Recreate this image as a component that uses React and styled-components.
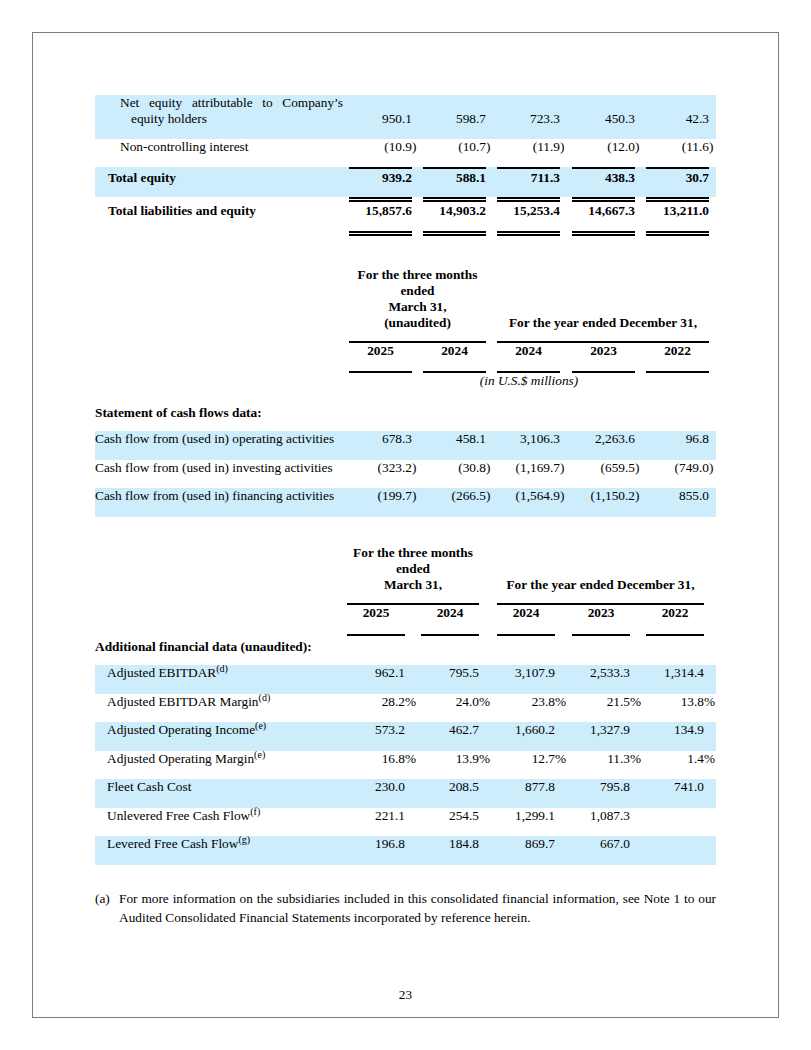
import styled, { createGlobalStyle, css } from "styled-components";

const BLUE = "#cdedfc";
// label column + five value columns + right padding
const WIDE = "1fr 69px 74px 74px 75px 74px 7px";
const NARROW = "1fr 74px 74px 76px 75px 74px 12px";

const GlobalStyle = createGlobalStyle`
  html, body {
    margin: 0;
    padding: 0;
    background: #fff;
  }
  body {
    font-family: "Liberation Serif", "Times New Roman", serif;
    color: #000;
  }
`;

const Page = styled.div`
  width: 811px;
  height: 1050px;
  padding: 32px;
  box-sizing: border-box;
`;

const Sheet = styled.main`
  height: 100%;
  box-sizing: border-box;
  border: 1px solid #7d7d7d;
  padding: 62px 62px 14px;
  display: flex;
  flex-direction: column;
  font-size: 13.33px;
  line-height: 16px;
`;

const Block = styled.section`
  margin-top: ${(p) => p.$gap || 0}px;
`;

const Row = styled.div`
  display: grid;
  grid-template-columns: ${(p) => p.$cols};
  align-items: ${(p) => p.$align || "end"};
  padding-bottom: ${(p) => p.$pb ?? 12}px;
  background: ${(p) => (p.$shade ? BLUE : "transparent")};
`;

const Label = styled.div`
  padding-left: ${(p) => p.$indent || 0}px;
  padding-top: ${(p) => p.$pt || 0}px;
  font-weight: ${(p) => (p.$bold ? 700 : 400)};
  ${(p) =>
    p.$hang &&
    css`
      padding-left: ${p.$indent + p.$hang}px;
      text-indent: -${p.$hang}px;
      text-align: justify;
    `}
`;

const Cell = styled.div`
  justify-self: end;
  width: ${(p) => p.$bar}px;
  text-align: right;
  white-space: nowrap;
  font-weight: ${(p) => (p.$bold ? 700 : 400)};
  ${(p) =>
    p.$rule === "single" &&
    css`
      border-top: 2px solid #000;
      padding-top: 1px;
    `}
  ${(p) =>
    p.$rule === "double" &&
    css`
      border-top: 5px double #000;
      border-bottom: 5px double #000;
      padding: 1px 0 12px;
    `}
`;

// closing paren / percent sign sits outside the number column
const Hang = styled.span`
  display: inline-block;
  width: 0;
`;

const Sup = styled.sup`
  font-size: 10px;
  line-height: 0;
  vertical-align: 5px;
`;

const HeadRow = styled.div`
  display: grid;
  grid-template-columns: ${(p) => p.$cols};
  align-items: end;
`;

const Group = styled.div`
  grid-column: ${(p) => p.$span};
  margin-left: ${(p) => p.$inset}px;
  padding-bottom: 10px;
  border-bottom: 2px solid #000;
  text-align: center;
  font-weight: 700;
`;

const Year = styled.div`
  justify-self: end;
  width: ${(p) => p.$bar}px;
  padding-bottom: ${(p) => p.$pb}px;
  border-bottom: 2px solid #000;
  text-align: center;
  font-weight: 700;
`;

const Units = styled.div`
  grid-column: 2 / 7;
  margin-left: 6px;
  text-align: center;
  font-style: italic;
`;

const SectionTitle = styled.div`
  margin-top: ${(p) => p.$gap || 0}px;
  font-weight: 700;
`;

const Rows = styled.div`
  margin-top: 10px;
`;

const Note = styled.div`
  display: flex;
  margin-top: 24px;
  line-height: 19px;
`;

const NoteMark = styled.span`
  flex: none;
  width: 24px;
`;

const NoteText = styled.p`
  flex: 1;
  margin: 0;
  text-align: justify;
`;

const PageNum = styled.div`
  margin-top: auto;
  text-align: center;
`;

function Val({ v }) {
  const last = v.slice(-1);
  if (last === ")" || last === "%") {
    return (
      <>
        {v.slice(0, -1)}
        <Hang>{last}</Hang>
      </>
    );
  }
  return v;
}

function Values({ values, bar, bold, rule }) {
  return values.map((v, i) => (
    <Cell key={i} $bar={bar} $bold={bold} $rule={rule}>
      <Val v={v} />
    </Cell>
  ));
}

const cashFlows = [
  ["Cash flow from (used in) operating activities", ["678.3", "458.1", "3,106.3", "2,263.6", "96.8"]],
  ["Cash flow from (used in) investing activities", ["(323.2)", "(30.8)", "(1,169.7)", "(659.5)", "(749.0)"]],
  ["Cash flow from (used in) financing activities", ["(199.7)", "(266.5)", "(1,564.9)", "(1,150.2)", "855.0"]],
];

const extras = [
  ["Adjusted EBITDAR", "d", ["962.1", "795.5", "3,107.9", "2,533.3", "1,314.4"]],
  ["Adjusted EBITDAR Margin", "d", ["28.2%", "24.0%", "23.8%", "21.5%", "13.8%"]],
  ["Adjusted Operating Income", "e", ["573.2", "462.7", "1,660.2", "1,327.9", "134.9"]],
  ["Adjusted Operating Margin", "e", ["16.8%", "13.9%", "12.7%", "11.3%", "1.4%"]],
  ["Fleet Cash Cost", null, ["230.0", "208.5", "877.8", "795.8", "741.0"]],
  ["Unlevered Free Cash Flow", "f", ["221.1", "254.5", "1,299.1", "1,087.3", ""]],
  ["Levered Free Cash Flow", "g", ["196.8", "184.8", "869.7", "667.0", ""]],
];

const years = ["2025", "2024", "2024", "2023", "2022"];

export default function App() {
  return (
    <Page>
      <GlobalStyle />
      <Sheet>
        <Block>
          <Row $cols={WIDE} $shade>
            <Label $indent={25} $hang={11}>
              Net equity attributable to Company’s equity holders
            </Label>
            <Values values={["950.1", "598.7", "723.3", "450.3", "42.3"]} bar={63} />
          </Row>
          <Row $cols={WIDE}>
            <Label $indent={25}>Non-controlling interest</Label>
            <Values values={["(10.9)", "(10.7)", "(11.9)", "(12.0)", "(11.6)"]} bar={63} />
          </Row>
          <Row $cols={WIDE} $shade $pb={11}>
            <Label $indent={13} $bold>
              Total equity
            </Label>
            <Values values={["939.2", "588.1", "711.3", "438.3", "30.7"]} bar={63} bold rule="single" />
          </Row>
          <Row $cols={WIDE} $align="start" $pb={0}>
            <Label $indent={13} $pt={6} $bold>
              Total liabilities and equity
            </Label>
            <Values
              values={["15,857.6", "14,903.2", "15,253.4", "14,667.3", "13,211.0"]}
              bar={63}
              bold
              rule="double"
            />
          </Row>
        </Block>

        <Block $gap={31}>
          <HeadRow $cols={WIDE}>
            <Group $span="2 / 4" $inset={6}>
              For the three months
              <br />
              ended
              <br />
              March 31,
              <br />
              (unaudited)
            </Group>
            <Group $span="4 / 7" $inset={11}>
              For the year ended December 31,
            </Group>
          </HeadRow>
          <HeadRow $cols={WIDE}>
            <div />
            {years.map((y, i) => (
              <Year key={i} $bar={63} $pb={12}>
                {y}
              </Year>
            ))}
          </HeadRow>
          <HeadRow $cols={WIDE}>
            <Units>(in U.S.$ millions)</Units>
          </HeadRow>
          <SectionTitle $gap={16}>Statement of cash flows data:</SectionTitle>
          <Rows>
            {cashFlows.map(([label, values], i) => (
              <Row key={label} $cols={WIDE} $shade={i % 2 === 0} $pb={12.5}>
                <Label>{label}</Label>
                <Values values={values} bar={63} />
              </Row>
            ))}
          </Rows>
        </Block>

        <Block $gap={28.5}>
          <HeadRow $cols={NARROW}>
            <Group $span="2 / 4" $inset={16}>
              For the three months
              <br />
              ended
              <br />
              March 31,
            </Group>
            <Group $span="4 / 7" $inset={18}>
              For the year ended December 31,
            </Group>
          </HeadRow>
          <HeadRow $cols={NARROW}>
            <div />
            {years.map((y, i) => (
              <Year key={i} $bar={58} $pb={13}>
                {y}
              </Year>
            ))}
          </HeadRow>
          <SectionTitle $gap={3}>Additional financial data (unaudited):</SectionTitle>
          <Rows>
            {extras.map(([label, note, values], i) => (
              <Row key={label} $cols={NARROW} $shade={i % 2 === 0} $pb={12.5}>
                <Label $indent={12}>
                  {label}
                  {note && <Sup>({note})</Sup>}
                </Label>
                <Values values={values} bar={58} />
              </Row>
            ))}
          </Rows>
        </Block>

        <Note>
          <NoteMark>(a)</NoteMark>
          <NoteText>
            For more information on the subsidiaries included in this consolidated financial information, see
            Note 1 to our Audited Consolidated Financial Statements incorporated by reference herein.
          </NoteText>
        </Note>

        <PageNum>23</PageNum>
      </Sheet>
    </Page>
  );
}
